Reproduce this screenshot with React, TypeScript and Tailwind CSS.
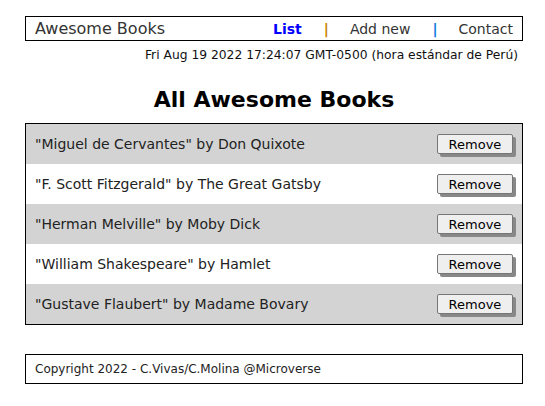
import React from "react";

const books = [
  { author: "Miguel de Cervantes", title: "Don Quixote" },
  { author: "F. Scott Fitzgerald", title: "The Great Gatsby" },
  { author: "Herman Melville", title: "Moby Dick" },
  { author: "William Shakespeare", title: "Hamlet" },
  { author: "Gustave Flaubert", title: "Madame Bovary" },
];

export default function App() {
  return (
    <div
      className="min-h-[406px] bg-white pl-[25px] pr-[22px] pt-[16px] text-black"
      style={{ fontFamily: "Verdana, 'DejaVu Sans', sans-serif" }}
    >
      <nav className="flex h-[25px] items-center justify-between border border-black pl-[9px] pr-[9px]">
        <span className="text-[16px] leading-none text-[#333]">Awesome Books</span>
        <ul className="flex items-center text-[14px] leading-none text-[#333]">
          <li className="font-bold text-[#0000ff]">List</li>
          <li className="ml-[22px] font-semibold text-[#c98300]">|</li>
          <li className="ml-[21px]">Add new</li>
          <li className="ml-[22px] font-semibold text-[#0a7ae0]">|</li>
          <li className="ml-[21px]">Contact</li>
        </ul>
      </nav>
      <p className="mt-[6px] pr-[5px] text-right text-[12.3px] leading-[16px] text-[#111]">
        Fri Aug 19 2022 17:24:07 GMT-0500 (hora estándar de Perú)
      </p>
      <h1 className="mt-[23px] text-center text-[22px] font-bold leading-[28px]">All Awesome Books</h1>
      <ul className="mt-[9px] border border-black">
        {books.map((b, i) => (
          <li
            key={i}
            className={`flex h-[40px] items-center justify-between pl-[9px] pr-[9px] ${
              i % 2 === 0 ? "bg-[#d3d3d3]" : "bg-white"
            }`}
          >
            <span className="text-[14px] text-[#222]">
              "{b.author}" by {b.title}
            </span>
            <button className="h-[20px] w-[76px] rounded-[2px] border border-[#767676] bg-[#efefef] text-[13px] leading-none text-black shadow-[3px_3px_0_#888]">
              Remove
            </button>
          </li>
        ))}
      </ul>
      <footer className="mt-[29px] flex h-[30px] items-center border border-black pl-[9px] text-[12px] text-[#222]">
        Copyright 2022 - C.Vivas/C.Molina @Microverse
      </footer>
    </div>
  );
}
